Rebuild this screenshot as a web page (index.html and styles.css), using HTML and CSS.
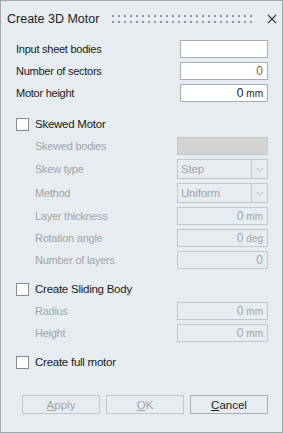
FILE: index.html
```html
<!DOCTYPE html>
<html lang="en">
<head>
  <meta charset="UTF-8" />
  <title>Create 3D Motor</title>
  <link rel="stylesheet" href="styles.css">
</head>
<body>
  <div class="dialog">

    <!-- title bar with drag grip and close -->
    <div class="titlebar">
      <span class="title">Create 3D Motor</span>
      <svg class="grip" width="144" height="8" viewBox="0 0 144 8">
        <defs>
          <pattern id="dots" width="6" height="6" patternUnits="userSpaceOnUse">
            <rect width="2" height="2" fill="#8d9398" />
          </pattern>
        </defs>
        <rect width="144" height="8" fill="url(#dots)" />
      </svg>
      <svg class="close" width="10" height="10" viewBox="0 0 10 10">
        <path d="M1 1 L9 9 M9 1 L1 9" stroke="#3a3a3a" stroke-width="1.1" fill="none" />
      </svg>
    </div>

    <div class="form">
      <div class="row">
        <span class="label">Input sheet bodies</span>
        <div class="field"></div>
      </div>
      <div class="row">
        <span class="label">Number of sectors</span>
        <div class="field"><span class="num accent">0</span></div>
      </div>
      <div class="row">
        <span class="label">Motor height</span>
        <div class="field"><span class="num">0</span><span class="unit">mm</span></div>
      </div>

      <!-- Skewed motor group -->
      <div class="row check-row first">
        <span class="box"></span>
        <span class="label">Skewed Motor</span>
      </div>
      <div class="row sub">
        <span class="label">Skewed bodies</span>
        <div class="field wide off filled"></div>
      </div>
      <div class="row sub tall">
        <span class="label">Skew type</span>
        <div class="combo">
          <div class="combo-text">Step</div>
          <div class="combo-btn">
            <svg width="7" height="5" viewBox="0 0 7 5"><path d="M0.5 1 L3.5 4 L6.5 1" stroke="#b4b8bc" fill="none" /></svg>
          </div>
        </div>
      </div>
      <div class="row sub tall">
        <span class="label">Method</span>
        <div class="combo">
          <div class="combo-text">Uniform</div>
          <div class="combo-btn">
            <svg width="7" height="5" viewBox="0 0 7 5"><path d="M0.5 1 L3.5 4 L6.5 1" stroke="#b4b8bc" fill="none" /></svg>
          </div>
        </div>
      </div>
      <div class="row sub">
        <span class="label">Layer thickness</span>
        <div class="field wide off"><span class="num">0</span><span class="unit">mm</span></div>
      </div>
      <div class="row sub">
        <span class="label">Rotation angle</span>
        <div class="field wide off"><span class="num">0</span><span class="unit">deg</span></div>
      </div>
      <div class="row sub">
        <span class="label">Number of layers</span>
        <div class="field wide off"><span class="num">0</span></div>
      </div>

      <!-- Sliding body group -->
      <div class="row check-row">
        <span class="box"></span>
        <span class="label">Create Sliding Body</span>
      </div>
      <div class="row sub">
        <span class="label">Radius</span>
        <div class="field wide off"><span class="num">0</span><span class="unit">mm</span></div>
      </div>
      <div class="row sub">
        <span class="label">Height</span>
        <div class="field wide off"><span class="num">0</span><span class="unit">mm</span></div>
      </div>

      <div class="row check-row">
        <span class="box"></span>
        <span class="label">Create full motor</span>
      </div>
    </div>

    <div class="buttons">
      <button class="btn" disabled><u>A</u>pply</button>
      <button class="btn" disabled><u>O</u>K</button>
      <button class="btn"><u>C</u>ancel</button>
    </div>
  </div>
</body>
</html>
```

FILE: styles.css
```css
html, body {
  margin: 0;
  padding: 0;
  background: #e6ecf0;
  font-family: "Liberation Sans", Arial, sans-serif;
}

/* whole panel, fills the window */
.dialog {
  width: 283px;
  height: 433px;
  box-sizing: border-box;
  border: 1px solid #a4a8ac;
  background: #e6ecf0;
  display: flex;
  flex-direction: column;
}

/* title bar */
.titlebar {
  height: 36px;
  display: flex;
  align-items: center;
  padding: 0 0 0 6px;
}
.title {
  font-size: 12.5px;
  color: #1e1e1e;
  width: 105px;
}
.grip {
  display: block;
}
.close {
  display: block;
  margin-left: 11px;
}

/* form rows */
.form {
  padding: 1px 14px 0 15px;
}
.row {
  height: 22px;
  display: flex;
  align-items: center;
  justify-content: space-between;
}
.row.tall {
  height: 24px;
}
.label {
  font-size: 11px;
  letter-spacing: -0.25px;
  color: #1a1a1a;
}
.sub {
  padding-left: 19px;
}
.sub .label {
  color: #a2a5a8;
}

/* checkbox rows */
.check-row {
  justify-content: flex-start;
  margin-top: 7px;
}
.check-row.first {
  margin-top: 9px;
}
.check-row .label {
  font-size: 11.5px;
}
.box {
  width: 13px;
  height: 13px;
  box-sizing: border-box;
  border: 1px solid #868a8e;
  background: #fff;
  margin-right: 6px;
}

/* text fields */
.field {
  width: 88px;
  height: 18px;
  box-sizing: border-box;
  border: 1px solid #a9adb1;
  background: #fff;
  display: flex;
  align-items: center;
  justify-content: flex-end;
  padding-right: 4px;
  color: #1a1a1a;
}
.field.wide {
  width: 91px;
}
.field.off {
  background: #e6ecf0;
  border-color: #c3c7cb;
  color: #a2a5a8;
}
.field.filled {
  background: #d3d3d3;
}
.num {
  font-size: 12px;
}
.num.accent {
  color: #9a5a10;
}
.unit {
  font-size: 10px;
  margin-left: 3px;
  margin-top: 1px;
}

/* disabled drop-downs */
.combo {
  width: 91px;
  height: 20px;
  display: flex;
}
.combo-text {
  flex: 1;
  box-sizing: border-box;
  border: 1px solid #c3c7cb;
  font-size: 11.5px;
  letter-spacing: -0.2px;
  color: #a2a5a8;
  padding: 3px 0 0 3px;
}
.combo-btn {
  width: 16px;
  box-sizing: border-box;
  border: 1px solid #c3c7cb;
  border-left: none;
  display: flex;
  align-items: center;
  justify-content: center;
}
.combo-btn svg {
  display: block;
}

/* bottom buttons */
.buttons {
  margin-top: 22px;
  padding-right: 14px;
  display: flex;
  justify-content: flex-end;
  gap: 6px;
}
.btn {
  width: 78px;
  height: 19px;
  box-sizing: border-box;
  border: 1px solid #abafb3;
  border-radius: 0;
  background: #e6ecf0;
  font-family: "Liberation Sans", Arial, sans-serif;
  font-size: 11.5px;
  color: #1a1a1a;
  padding: 0;
}
.btn:disabled {
  color: #a2a5a8;
  border-color: #c3c7cb;
}
```
